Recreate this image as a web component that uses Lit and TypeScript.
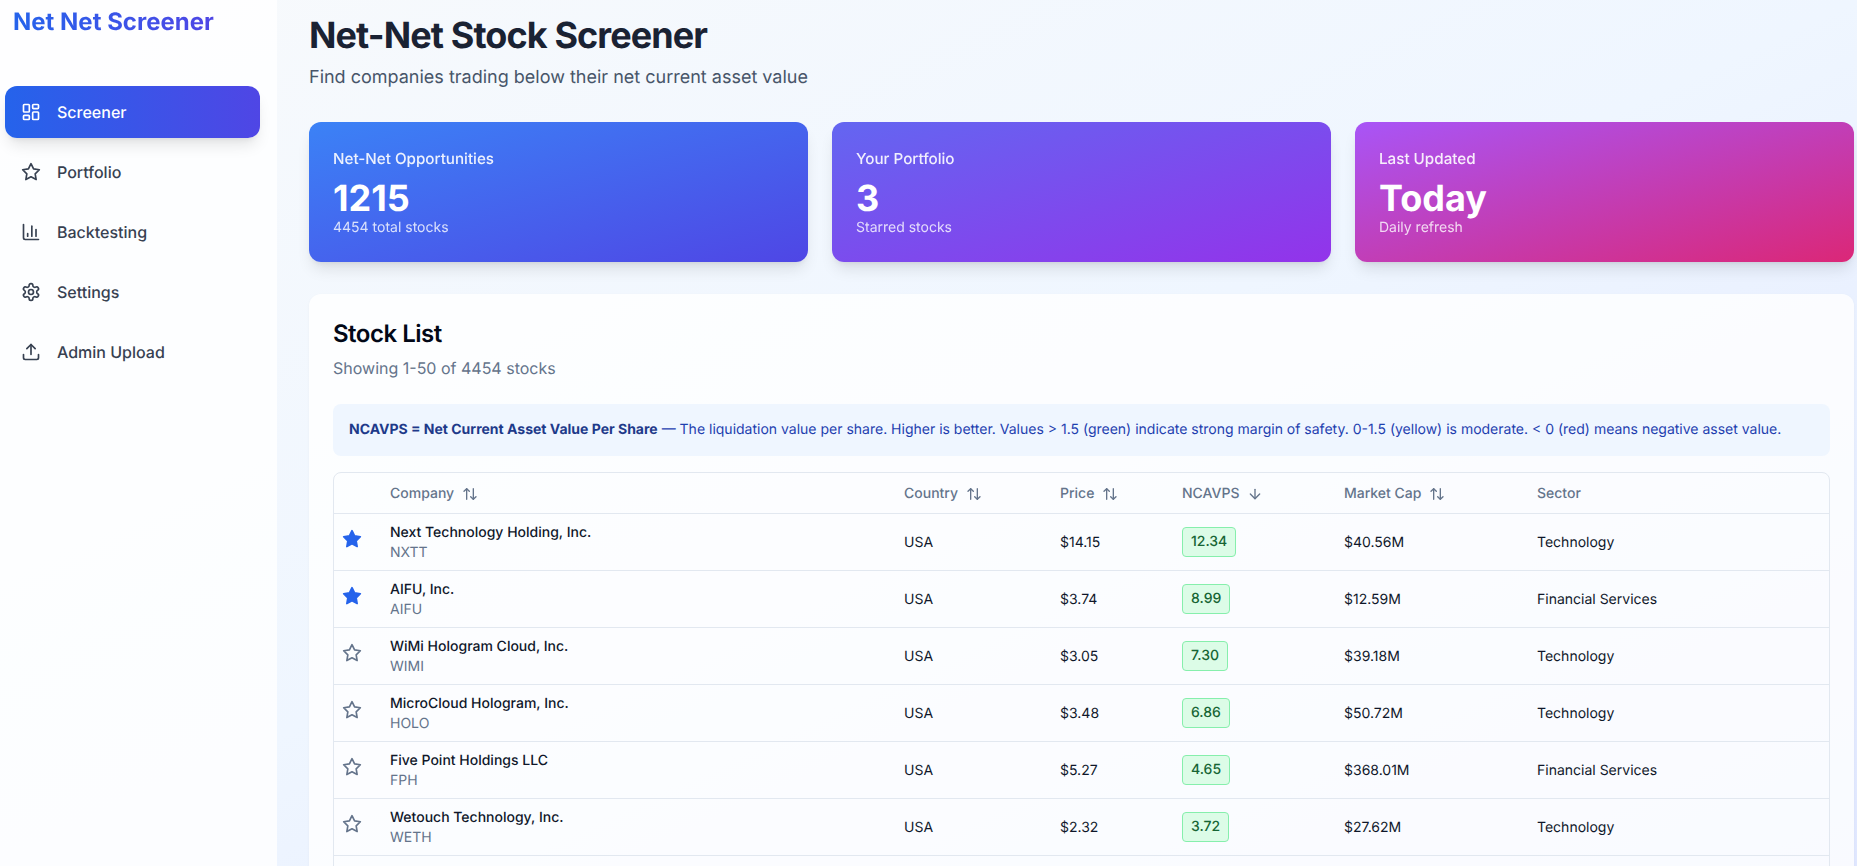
import { LitElement, html, css, svg } from "lit";
import { customElement } from "lit/decorators.js";

const ic = (inner: unknown, cls = "") => html`<svg class=${cls} viewBox="0 0 24 24" fill="none" stroke="currentColor" stroke-width="2" stroke-linecap="round" stroke-linejoin="round">${inner}</svg>`;

const STAR = svg`<polygon points="12 2 15.09 8.26 22 9.27 17 14.14 18.18 21.02 12 17.77 5.82 21.02 7 14.14 2 9.27 8.91 8.26 12 2"/>`;
const DASH = svg`<rect x="3" y="3" width="7" height="9" rx="1"/><rect x="14" y="3" width="7" height="5" rx="1"/><rect x="14" y="12" width="7" height="9" rx="1"/><rect x="3" y="16" width="7" height="5" rx="1"/>`;
const CHART = svg`<path d="M3 3v16a2 2 0 0 0 2 2h16"/><path d="M18 17V9"/><path d="M13 17V5"/><path d="M8 17v-3"/>`;
const GEAR = svg`<path d="M12.22 2h-.44a2 2 0 0 0-2 2v.18a2 2 0 0 1-1 1.73l-.43.25a2 2 0 0 1-2 0l-.15-.08a2 2 0 0 0-2.73.73l-.22.38a2 2 0 0 0 .73 2.73l.15.1a2 2 0 0 1 1 1.72v.51a2 2 0 0 1-1 1.74l-.15.09a2 2 0 0 0-.73 2.73l.22.38a2 2 0 0 0 2.73.73l.15-.08a2 2 0 0 1 2 0l.43.25a2 2 0 0 1 1 1.73V20a2 2 0 0 0 2 2h.44a2 2 0 0 0 2-2v-.18a2 2 0 0 1 1-1.73l.43-.25a2 2 0 0 1 2 0l.15.08a2 2 0 0 0 2.73-.73l.22-.39a2 2 0 0 0-.73-2.73l-.15-.08a2 2 0 0 1-1-1.74v-.5a2 2 0 0 1 1-1.74l.15-.09a2 2 0 0 0 .73-2.73l-.22-.38a2 2 0 0 0-2.73-.73l-.15.08a2 2 0 0 1-2 0l-.43-.25a2 2 0 0 1-1-1.73V4a2 2 0 0 0-2-2z"/><circle cx="12" cy="12" r="3"/>`;
const UPLOAD = svg`<path d="M21 15v4a2 2 0 0 1-2 2H5a2 2 0 0 1-2-2v-4"/><polyline points="17 8 12 3 7 8"/><line x1="12" y1="3" x2="12" y2="15"/>`;
const UPDOWN = svg`<path d="m21 16-4 4-4-4"/><path d="M17 20V4"/><path d="m3 8 4-4 4 4"/><path d="M7 4v16"/>`;
const DOWN = svg`<path d="M12 5v14"/><path d="m19 12-7 7-7-7"/>`;

const NAV = [
  { label: "Screener", icon: DASH, active: true },
  { label: "Portfolio", icon: STAR },
  { label: "Backtesting", icon: CHART },
  { label: "Settings", icon: GEAR },
  { label: "Admin Upload", icon: UPLOAD },
];

const CARDS = [
  { cls: "blue", label: "Net-Net Opportunities", value: "1215", sub: "4454 total stocks" },
  { cls: "violet", label: "Your Portfolio", value: "3", sub: "Starred stocks" },
  { cls: "pink", label: "Last Updated", value: "Today", sub: "Daily refresh" },
];

const ROWS = [
  { fav: true, name: "Next Technology Holding, Inc.", tick: "NXTT", country: "USA", price: "$14.15", n: "12.34", cap: "$40.56M", sector: "Technology" },
  { fav: true, name: "AIFU, Inc.", tick: "AIFU", country: "USA", price: "$3.74", n: "8.99", cap: "$12.59M", sector: "Financial Services" },
  { fav: false, name: "WiMi Hologram Cloud, Inc.", tick: "WIMI", country: "USA", price: "$3.05", n: "7.30", cap: "$39.18M", sector: "Technology" },
  { fav: false, name: "MicroCloud Hologram, Inc.", tick: "HOLO", country: "USA", price: "$3.48", n: "6.86", cap: "$50.72M", sector: "Technology" },
  { fav: false, name: "Five Point Holdings LLC", tick: "FPH", country: "USA", price: "$5.27", n: "4.65", cap: "$368.01M", sector: "Financial Services" },
  { fav: false, name: "Wetouch Technology, Inc.", tick: "WETH", country: "USA", price: "$2.32", n: "3.72", cap: "$27.62M", sector: "Technology" },
];

const COLS = [40, 514, 156, 122, 162, 193, 309];

@customElement("app-root")
export class AppRoot extends LitElement {
  static styles = css`
    :host {
      display: flex;
      width: 100%;
      height: 866px;
      overflow: hidden;
      font-family: Inter, "Noto Sans", sans-serif;
      text-rendering: geometricPrecision;
      color: #0f172a;
      background: linear-gradient(to bottom right, #f8fafc 0%, #eff6ff 50%, #e0e7ff 100%);
    }
    svg { width: 20px; height: 20px; flex: none; display: block; }

    .side {
      width: 277px;
      flex: none;
      background: rgba(255, 255, 255, 0.8);
      padding: 6px 17px 0 5px;
      box-sizing: border-box;
    }
    .logo {
      margin: 0 0 48px 8px;
      font-size: 24px;
      line-height: 32px;
      font-weight: 700;
      width: max-content;
      background: linear-gradient(90deg, #2563eb, #4f46e5);
      -webkit-background-clip: text;
      background-clip: text;
      color: transparent;
    }
    nav { display: flex; flex-direction: column; gap: 8px; }
    .item {
      display: flex;
      align-items: center;
      gap: 16px;
      padding: 14px 16px;
      border-radius: 12px;
      font-size: 16px;
      line-height: 24px;
      font-weight: 500;
      color: #374151;
    }
    .item.active {
      color: #fff;
      background: linear-gradient(90deg, #2563eb, #4f46e5);
      box-shadow: 0 10px 15px -3px rgba(0,0,0,.1), 0 4px 6px -4px rgba(0,0,0,.1);
    }

    main { flex: 1; min-width: 0; padding: 15px 3px 0 32px; }
    h1 {
      margin: 0;
      font-size: 36px;
      line-height: 40px;
      font-weight: 700;
      color: #1a2233;
      letter-spacing: -0.9px;
    }
    .tagline { margin: 9px 0 0; font-size: 18px; line-height: 28px; color: #475569; }

    .cards { display: grid; grid-template-columns: repeat(3, 1fr); gap: 24px; margin-top: 30px; }
    .card {
      height: 140px;
      box-sizing: border-box;
      padding: 25px 24px 0;
      border-radius: 12px;
      color: #fff;
      box-shadow: 0 10px 15px -3px rgba(0,0,0,.1), 0 4px 6px -4px rgba(0,0,0,.1);
    }
    .blue { background: linear-gradient(to bottom right, #3b82f6, #4f46e5); }
    .violet { background: linear-gradient(to bottom right, #6366f1, #9333ea); }
    .pink { background: linear-gradient(to bottom right, #a855f7, #db2777); }
    .card-label { font-size: 15.2px; line-height: 23px; font-weight: 500; opacity: .9; }
    .card-value { font-size: 36px; line-height: 40px; font-weight: 700; margin-top: 8px; }
    .card-sub { font-size: 14px; line-height: 20px; opacity: .8; }

    .panel {
      margin-top: 32px;
      background: rgba(255, 255, 255, 0.8);
      border-radius: 12px;
      padding: 24px;
      box-shadow: 0 1px 3px rgba(0,0,0,.04);
    }
    h2 { margin: 0; font-size: 24px; line-height: 32px; font-weight: 600; color: #020817; letter-spacing: -0.5px; }
    .count { margin: 6px 0 0; font-size: 16px; line-height: 24px; color: #64748b; }
    .note {
      margin-top: 24px;
      padding: 16px;
      border-radius: 8px;
      background: #eff6ff;
      color: #1e40af;
      font-size: 14px;
      line-height: 20px;
    }
    .note strong { font-weight: 700; color: #1e3a8a; }

    .table-wrap { margin-top: 16px; border: 1px solid #e2e8f0; border-radius: 8px; }
    table { width: 100%; table-layout: fixed; border-collapse: collapse; font-size: 14px; line-height: 20px; }
    th {
      height: 38px;
      padding: 2px 16px 0;
      text-align: left;
      font-weight: 500;
      color: #64748b;
    }
    .th { display: inline-flex; align-items: center; gap: 8px; }
    .th svg { width: 16px; height: 16px; }
    tr { border-bottom: 1px solid #e2e8f0; }
    td { padding: 9px 16px 7px; color: #0f172a; }
    td.fav { padding: 0 0 6px 8px; }
    td.score { padding: 8px 16px; }
    .fav svg { color: #64748b; }
    .fav .on { color: #2563eb; fill: #2563eb; }
    .name { font-weight: 500; }
    .tick { color: #64748b; }
    .badge {
      display: inline-block;
      padding: 4px 8px;
      border: 1px solid #86efac;
      border-radius: 4px;
      background: #dcfce7;
      color: #166534;
      font-weight: 500;
    }
    .blank { height: 40px; }
  `;

  private head(label: string, sort: "both" | "down" | "none") {
    return html`<th><span class="th">${label}${sort === "both" ? ic(UPDOWN) : sort === "down" ? ic(DOWN) : ""}</span></th>`;
  }

  render() {
    return html`
      <aside class="side">
        <div class="logo">Net Net Screener</div>
        <nav>
          ${NAV.map((n) => html`<div class="item ${n.active ? "active" : ""}">${ic(n.icon)}<span>${n.label}</span></div>`)}
        </nav>
      </aside>
      <main>
        <h1>Net-Net Stock Screener</h1>
        <p class="tagline">Find companies trading below their net current asset value</p>
        <section class="cards">
          ${CARDS.map((c) => html`<div class="card ${c.cls}">
            <div class="card-label">${c.label}</div>
            <div class="card-value">${c.value}</div>
            <div class="card-sub">${c.sub}</div>
          </div>`)}
        </section>
        <section class="panel">
          <h2>Stock List</h2>
          <p class="count">Showing 1-50 of 4454 stocks</p>
          <div class="note"><strong>NCAVPS = Net Current Asset Value Per Share</strong> — The liquidation value per share. Higher is better. Values &gt; 1.5 (green) indicate strong margin of safety. 0-1.5 (yellow) is moderate. &lt; 0 (red) means negative asset value.</div>
          <div class="table-wrap">
            <table>
              <colgroup>${COLS.map((w) => html`<col style="width:${w}px" />`)}</colgroup>
              <thead>
                <tr>
                  <th></th>
                  ${this.head("Company", "both")}
                  ${this.head("Country", "both")}
                  ${this.head("Price", "both")}
                  ${this.head("NCAVPS", "down")}
                  ${this.head("Market Cap", "both")}
                  ${this.head("Sector", "none")}
                </tr>
              </thead>
              <tbody>
                ${ROWS.map((r) => html`<tr>
                  <td class="fav">${ic(STAR, r.fav ? "on" : "")}</td>
                  <td><div class="name">${r.name}</div><div class="tick">${r.tick}</div></td>
                  <td>${r.country}</td>
                  <td>${r.price}</td>
                  <td class="score"><span class="badge">${r.n}</span></td>
                  <td>${r.cap}</td>
                  <td>${r.sector}</td>
                </tr>`)}
                <tr><td class="blank" colspan="7"></td></tr>
              </tbody>
            </table>
          </div>
        </section>
      </main>
    `;
  }
}
